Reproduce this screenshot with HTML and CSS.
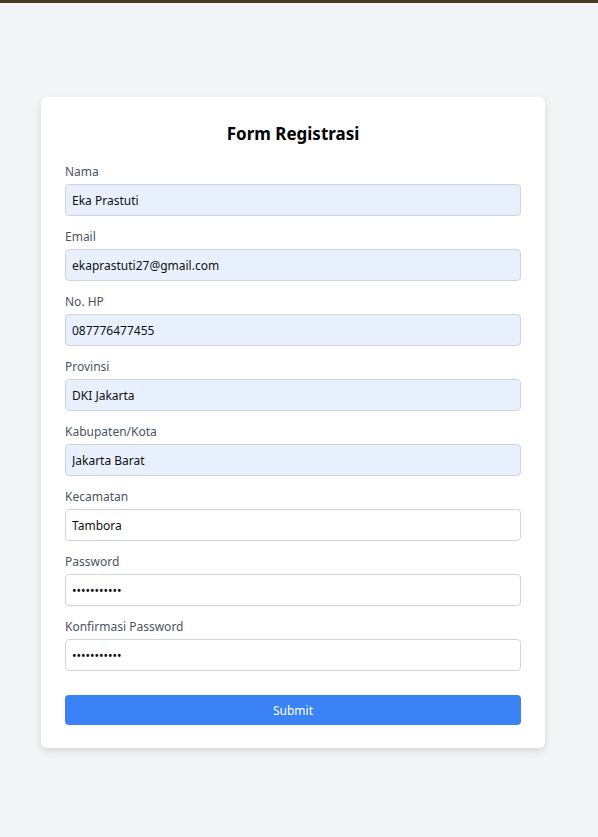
FILE: index.html
```html
<!DOCTYPE html>
<html lang="id">
<head>
<meta charset="utf-8">
<title>Form Registrasi</title>
<link rel="stylesheet" href="styles.css">
</head>
<body>
<div class="topbar"></div>
<main class="page">
  <form class="card">
    <h1 class="title">Form Registrasi</h1>
    <div class="field">
      <label class="label">Nama</label>
      <input class="input filled" type="text" value="Eka Prastuti">
    </div>
    <div class="field">
      <label class="label">Email</label>
      <input class="input filled" type="text" value="ekaprastuti27@gmail.com">
    </div>
    <div class="field">
      <label class="label">No. HP</label>
      <input class="input filled" type="text" value="087776477455">
    </div>
    <div class="field">
      <label class="label">Provinsi</label>
      <input class="input filled" type="text" value="DKI Jakarta">
    </div>
    <div class="field">
      <label class="label">Kabupaten/Kota</label>
      <input class="input filled" type="text" value="Jakarta Barat">
    </div>
    <div class="field">
      <label class="label">Kecamatan</label>
      <input class="input" type="text" value="Tambora">
    </div>
    <div class="field">
      <label class="label">Password</label>
      <input class="input" type="password" value="ekaprastuti">
    </div>
    <div class="field field-last">
      <label class="label">Konfirmasi Password</label>
      <input class="input" type="password" value="ekaprastuti">
    </div>
    <button class="submit" type="button">Submit</button>
  </form>
</main>
</body>
</html>
```
FILE: styles.css
```css
* { box-sizing: border-box; }
html, body { margin: 0; padding: 0; }
body {
  background: #f3f4f6;
  font-family: "Noto Sans", "Open Sans", sans-serif;
  color: #111827;
  min-height: 837px;
}
.topbar {
  height: 3px;
  background: #4a3a2b;
}
.page {
  display: flex;
  justify-content: center;
  padding: 94px 12px 0 0;
}
.card {
  width: 504px;
  background: #ffffff;
  border-radius: 6px;
  box-shadow: 0 4px 10px rgba(0,0,0,0.08), 0 2px 4px rgba(0,0,0,0.05);
  padding: 24px 24px 23px;
  display: flex;
  flex-direction: column;
}
.title {
  margin: 0 0 17px;
  font-size: 17px;
  line-height: 25px;
  font-weight: 700;
  text-align: center;
  color: #000;
}
.field {
  display: flex;
  flex-direction: column;
  margin-bottom: 12px;
}
.field-last { margin-bottom: 24px; }
.label {
  font-size: 12px;
  line-height: 18px;
  color: #4b5563;
  margin-bottom: 3px;
}
.input {
  height: 32px;
  border: 1px solid #d1d5db;
  border-radius: 4px;
  background: #fff;
  padding: 0 6px;
  font-family: inherit;
  font-size: 12px;
  color: #111;
  outline: none;
}
.input.filled { background: #e8f0fe; }
.submit {
  height: 30px;
  border: none;
  border-radius: 4px;
  background: #3b82f6;
  color: #fff;
  font-family: inherit;
  font-size: 12px;
}
```
